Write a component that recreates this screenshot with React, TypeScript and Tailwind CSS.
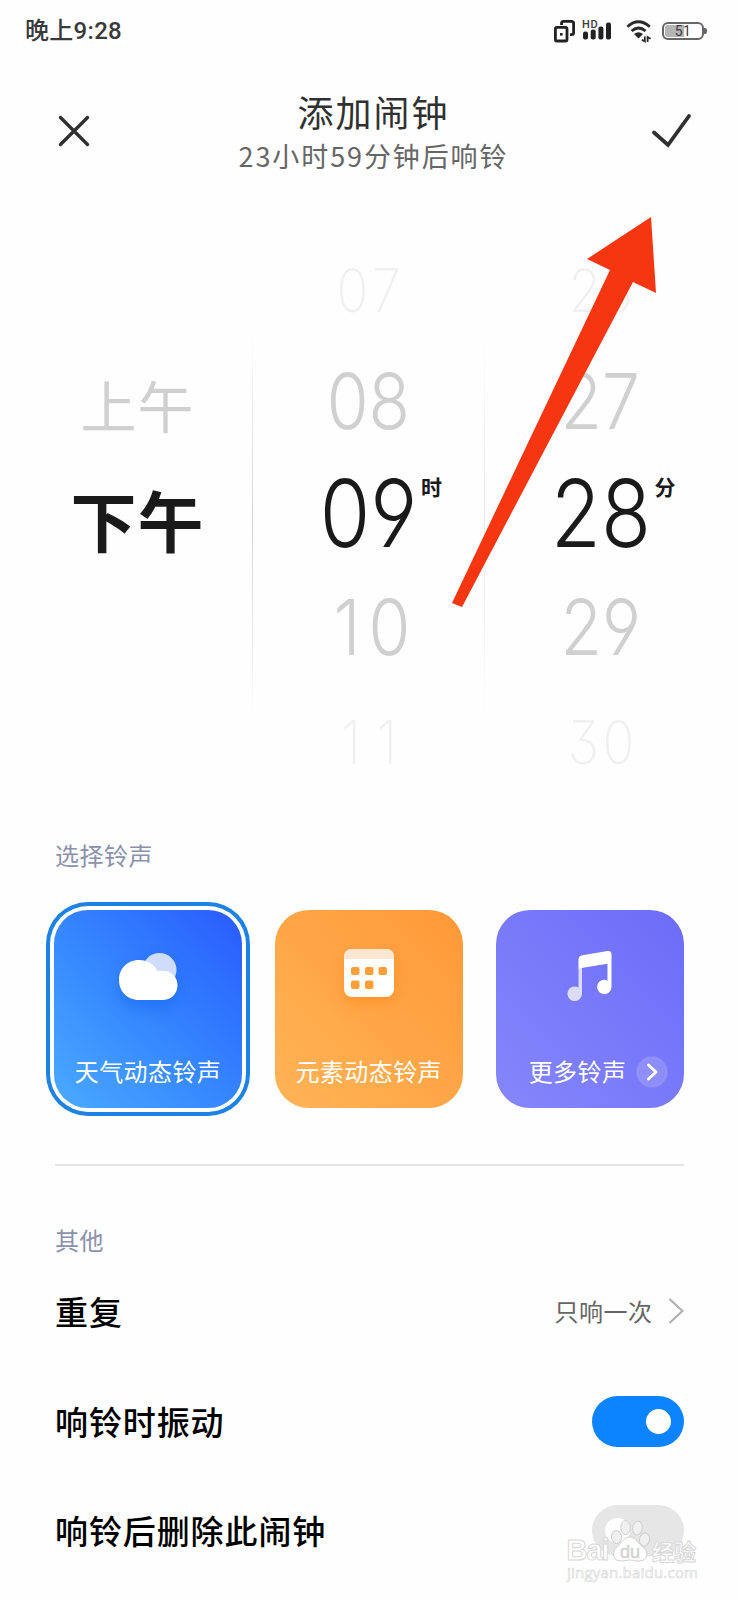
import React, { useState } from 'react';

type Level = 'far' | 'near' | 'active';

const numberStyles: Record<Level, string> = {
  far: 'text-[60px] font-extralight text-[#f0f0f0]',
  near: '-mt-[3px] text-[77px] font-light text-[#d0d0d0]',
  active: '-mt-[5px] text-[93px] font-[350] text-[#1a1a1a]',
};

const levels: Level[] = ['far', 'near', 'active', 'near', 'far'];

const spacing: Record<string, string> = {
  '07': 'tracking-[5px] pl-[5px]',
  '10': 'tracking-[9px] pl-[16px]',
  '11': 'tracking-[18px] pl-[18px]',
  '26': 'tracking-[2px] pl-[2px]',
  '30': 'tracking-[4px] pl-[4px]',
};

const StatusBar: React.FC = () => (
  <div className="flex h-[62px] items-center justify-between pl-[25px] pr-[31px] text-[#3a3a3a]">
    <span className="font-['Roboto','Noto_Sans_CJK_SC',sans-serif] text-2xl font-medium leading-none tracking-[0.3px]">晚上9:28</span>
    <div className="flex items-center">
      <svg className="h-[26px] w-6" viewBox="0 0 24 26" fill="none" stroke="#222" strokeWidth={2.8}>
        <rect x="3.4" y="9.4" width="11.6" height="13.6" rx="1.5" />
        <path d="M9.5 7V5.5Q9.5 3.4 11.5 3.4H19.5Q21.6 3.4 21.6 5.5V14.5Q21.6 16.6 19.5 16.6H18" />
        <rect x="8" y="15" width="2.6" height="2.6" fill="#222" stroke="none" />
      </svg>
      <div className="relative ml-[5px] h-[26px] w-8">
        <span className="absolute left-[1px] top-[1px] font-['Roboto',sans-serif] text-[11px] font-medium leading-none tracking-[0.6px]">HD</span>
        <svg className="h-[26px] w-8" viewBox="0 0 32 26" fill="#222">
          <rect x="2" y="13.500" width="5" height="8" rx="2" />
          <rect x="9.7" y="11.500" width="5" height="10" rx="2" />
          <rect x="17.4" y="8.500" width="5" height="13" rx="2" />
          <rect x="25" y="4.500" width="5" height="17" rx="2" />
        </svg>
      </div>
      <svg className="ml-[12px] h-[26px] w-7" viewBox="0 0 28 26" fill="none" stroke="#2a2a2a" strokeWidth={2.8}>
        <path d="M2.4 8.7Q13.5 -1.100 24.8 8.7" />
        <path d="M6.6 13Q13.5 7 20.6 13" />
        <path d="M9 16Q13.5 12.500 18 16L13.5 20.500Z" fill="#2a2a2a" stroke="none" />
        <path d="M19.8 18.500v5l-3-1.800M22.6 24v-5l3 1.800" strokeWidth={1.8} />
      </svg>
      <div className="ml-[9px] flex items-center">
        <div className="relative flex h-[18px] w-[42px] items-center justify-center rounded-[6px] border-2 border-[#666]">
          <span className="absolute left-[1px] top-[1px] h-3 w-[19px] rounded-l-[3px] bg-[#b5b5b5]" />
          <span className="relative font-['Roboto',sans-serif] text-[14px] leading-none tracking-[0.5px]">51</span>
        </div>
        <span className="h-[6px] w-[3px] rounded-r-[2px] bg-[#666]" />
      </div>
    </div>
  </div>
);

const Header: React.FC = () => (
  <header className="flex h-[140px] items-start justify-between px-[55px]">
    <button className="mt-[51px]">
      <svg className="h-9 w-9" viewBox="0 0 36 36" fill="none" stroke="#303030" strokeWidth={3.4} strokeLinecap="round">
        <path d="M5.500 4.500L32.500 31.500M32.500 4.500L5.500 31.500" />
      </svg>
    </button>
    <div className="mt-[27px] flex flex-col items-center pl-[5px]">
      <h1 className="text-[36px] leading-[44px] tracking-[2px] text-[#303030]">添加闹钟</h1>
      <p className="mt-0.5 text-[27px] leading-[42px] tracking-[1.9px] text-[#666]">23小时59分钟后响铃</p>
    </div>
    <button className="-mr-[10px] mt-[49px]">
      <svg className="h-10 w-[42px]" viewBox="0 0 42 40" fill="none" stroke="#303030" strokeWidth={3.8} strokeLinecap="round">
        <path d="M3 21.500L17 34L38 5" />
      </svg>
    </button>
  </header>
);

const NumberWheel: React.FC<{ values: string[]; unit: string }> = ({ values, unit }) => (
  <div className="grid w-[231px] grid-rows-5">
    {values.map((value, i) => (
      <div key={value} className="flex items-center justify-center">
        <div className="relative">
          <span
            className={`block origin-center scale-x-[0.88] font-['Inter',sans-serif] leading-none [font-feature-settings:'ss01','cv09'] ${numberStyles[levels[i]]} ${spacing[value] ?? ''}`}
          >
            {value}
          </span>
          {levels[i] === 'active' && (
            <span className="absolute left-full top-[4px] -ml-[3px] text-[21px] font-bold leading-none text-[#1a1a1a]">{unit}</span>
          )}
        </div>
      </div>
    ))}
  </div>
);

const WheelDivider: React.FC<{ className: string }> = ({ className }) => (
  <div className={`mt-[92px] h-[395px] w-px bg-linear-to-b from-transparent from-2% via-50% to-transparent ${className}`} />
);

const TimePicker: React.FC = () => (
  <section className="flex h-[565px]">
    <div className="flex w-[252px] flex-col items-center pl-[23px] pt-[141px]">
      <span className="text-[56px] leading-[60px] tracking-[1px] text-[#d0d0d0]">上午</span>
      <span className="mt-[48px] text-[66px] font-bold leading-[72px] tracking-[1px] text-[#1a1a1a]">下午</span>
    </div>
    <WheelDivider className="via-[#d4d4d4]" />
    <NumberWheel values={['07', '08', '09', '10', '11']} unit="时" />
    <WheelDivider className="via-[#e9e9e9]" />
    <NumberWheel values={['26', '27', '28', '29', '30']} unit="分" />
  </section>
);

const CloudIcon: React.FC = () => (
  <svg className="h-[60px] w-[64px] drop-shadow-[0_8px_8px_rgba(0,90,220,0.35)]" viewBox="0 0 64 60">
    <circle cx="43.500" cy="22" r="17" fill="#cfdcfd" />
    <path d="M23 12C33 12 38 17 41.500 23C54 21 61.500 28 61.500 37C61.500 46 55 52 46 52H23C11 52 3 43 3 32S11 12 23 12Z" fill="#fff" />
  </svg>
);

const CalendarIcon: React.FC = () => (
  <svg className="h-[60px] w-[64px] drop-shadow-[0_6px_7px_rgba(255,130,20,0.5)]" viewBox="0 0 64 60">
    <rect x="7" y="1" width="50" height="48" rx="8" fill="#fff" />
    <path d="M7 11V9Q7 1 15 1H49Q57 1 57 9V11Z" fill="#fde6d2" />
    <g fill="#ff9f38">
      <rect x="14" y="19" width="8.500" height="8" rx="2" />
      <rect x="28" y="19" width="8.500" height="8" rx="2" />
      <rect x="41.500" y="19" width="8.500" height="8" rx="2" />
      <rect x="14" y="32.500" width="8.500" height="8.500" rx="2" />
      <rect x="28" y="32.500" width="8.500" height="8.500" rx="2" />
    </g>
  </svg>
);

const MusicIcon: React.FC = () => (
  <svg className="h-[60px] w-[64px]" viewBox="0 0 64 60">
    <path d="M20.500 20H24V46A7.300 7.300 0 1 1 20.500 39.500Z" fill="#dcdcfe" />
    <path d="M20.500 20.500V11.500Q20.500 8 24.500 7.200L49.500 3.100Q53.500 2.700 53.500 6.500V39A7.200 7.200 0 1 1 49.500 32.500V15.800L20.500 20.500Z" fill="#fff" />
  </svg>
);

const RingtoneCard: React.FC<{
  label: string;
  icon: React.ReactNode;
  gradient: string;
  selected?: boolean;
  more?: boolean;
  onClick: () => void;
}> = ({ label, icon, gradient, selected, more, onClick }) => (
  <button
    onClick={onClick}
    className={`flex h-[198px] w-[188px] flex-col items-center rounded-[34px] bg-linear-to-tr pt-[38px] text-white ${gradient} ${
      selected ? 'shadow-[0_0_0_4px_#fff,0_0_0_8px_#1c82e4]' : ''
    }`}
  >
    {icon}
    <span className={`mt-[47px] flex h-8 items-center whitespace-nowrap text-[24px] leading-none tracking-[0.4px] ${more ? 'pl-[18px]' : ''}`}>
      {label}
      {more && (
        <svg className="ml-[10px] mt-px h-8 w-8" viewBox="0 0 32 32" fill="none">
          <circle cx="16" cy="16" r="15" fill="#fff" fillOpacity="0.16" stroke="#fff" strokeOpacity="0.08" strokeWidth="2" />
          <path d="M12.500 9L20 16L12.500 23" stroke="#fff" strokeWidth="3" strokeLinecap="round" strokeLinejoin="round" />
        </svg>
      )}
    </span>
  </button>
);

const Toggle: React.FC<{ on: boolean; onChange: () => void }> = ({ on, onChange }) => (
  <button
    onClick={onChange}
    className={`flex h-[51px] w-[92px] items-center rounded-full px-[13px] ${on ? 'justify-end bg-[#0d84ff]' : 'justify-start bg-[#e6e6e6]'}`}
  >
    <span className="h-[25px] w-[25px] rounded-full bg-white" />
  </button>
);

const SettingRow: React.FC<{ label: string; children: React.ReactNode }> = ({ label, children }) => (
  <div className="flex h-[109.5px] items-center justify-between">
    <span className="pl-px text-[33px] font-medium leading-none tracking-[0.9px] text-black">{label}</span>
    {children}
  </div>
);

const Watermark: React.FC = () => (
  <div className="pointer-events-none absolute left-[565px] top-[1518px] h-[68px] w-[136px]">
    <svg className="h-[68px] w-[136px]" viewBox="0 0 136 68" fill="#fff" stroke="#d8d8d8" strokeWidth={1}>
      <text x="1.500" y="42" fontFamily="'Liberation Sans', sans-serif" fontSize="29" fontWeight="bold" textLength="43">Bai</text>
      <g fill="#f0f0f0" stroke="#d0d0d0">
        <ellipse cx="51.500" cy="19" rx="5" ry="6.500" transform="rotate(-8 51.5 19)" />
        <ellipse cx="60.500" cy="9.500" rx="4.800" ry="7" />
        <ellipse cx="72.500" cy="10" rx="4.800" ry="7" transform="rotate(8 72.5 10)" />
        <ellipse cx="79.500" cy="21.500" rx="5" ry="6.500" transform="rotate(10 79.5 21.5)" />
        <path d="M65 19C71 19 73 26 79 30C84 34 83 43 74 43C69 43 67 42 65 42S60 43 56 43C47 43 47 34 51 30C56 26 59 19 65 19Z" fill="#fff" />
      </g>
      <text x="55" y="40" fontFamily="'Liberation Sans', sans-serif" fontSize="18" fill="#d4d4d4" stroke="#d4d4d4" strokeWidth="0.600">du</text>
      <text x="87" y="42" fontFamily="'Noto Sans CJK SC', sans-serif" fontSize="22" fontWeight="bold">经验</text>
      <text x="2" y="60" fontFamily="'Open Sans', sans-serif" fontSize="15" textLength="131" strokeWidth="0.600">jingyan.baidu.com</text>
    </svg>
  </div>
);

const App: React.FC = () => {
  const [ringtone, setRingtone] = useState('weather');
  const [vibrate, setVibrate] = useState(true);
  const [removeAfter, setRemoveAfter] = useState(false);

  return (
    <div className="relative flex h-[1600px] w-[738px] flex-col overflow-hidden bg-[#fefefe] font-['Noto_Sans_CJK_SC',sans-serif]">
      <StatusBar />
      <Header />
      <div className="pt-[31px]">
        <TimePicker />
      </div>

      <main className="pl-[54px] pr-[54.5px] pt-[42px]">
        <h2 className="pl-px text-[24px] leading-[30px] tracking-[0.5px] text-[#8b91ab]">选择铃声</h2>
        <div className="mt-10 flex justify-between">
          <RingtoneCard
            label="天气动态铃声"
            icon={<CloudIcon />}
            gradient="from-[#4baaff] to-[#2b59ff]"
            selected={ringtone === 'weather'}
            onClick={() => setRingtone('weather')}
          />
          <RingtoneCard
            label="元素动态铃声"
            icon={<CalendarIcon />}
            gradient="from-[#ffb456] to-[#ff9836]"
            selected={ringtone === 'element'}
            onClick={() => setRingtone('element')}
          />
          <RingtoneCard
            label="更多铃声"
            icon={<MusicIcon />}
            gradient="from-[#8686fb] to-[#6c6cf9]"
            more
            onClick={() => setRingtone('more')}
          />
        </div>

        <div className="ml-px mt-14 h-0.5 bg-[#e5e5e5]" />

        <h2 className="mb-[2px] mt-[59px] pl-px text-[24px] leading-[30px] tracking-[0.5px] text-[#8b91ab]">其他</h2>
        <SettingRow label="重复">
          <span className="flex items-center pb-[2px] text-[24px] leading-none tracking-[0.5px] text-[#666]">
            只响一次
            <svg className="ml-[13px] h-7 w-[18px]" viewBox="0 0 18 28" fill="none" stroke="#b0b0b0" strokeWidth={2.2}>
              <path d="M3.500 2L16.500 14L3.500 26" />
            </svg>
          </span>
        </SettingRow>
        <SettingRow label="响铃时振动">
          <Toggle on={vibrate} onChange={() => setVibrate(!vibrate)} />
        </SettingRow>
        <SettingRow label="响铃后删除此闹钟">
          <Toggle on={removeAfter} onChange={() => setRemoveAfter(!removeAfter)} />
        </SettingRow>
      </main>

      {/* Arrow pointing at the confirm button */}
      <svg className="pointer-events-none absolute left-[440px] top-[210px] h-[410px] w-[230px]" viewBox="440 210 230 410">
        <polygon points="651,217 587,259 610,270 452,603 462,607 633,282 656,293" fill="#f63511" />
      </svg>
      <Watermark />
    </div>
  );
};

export default App;
